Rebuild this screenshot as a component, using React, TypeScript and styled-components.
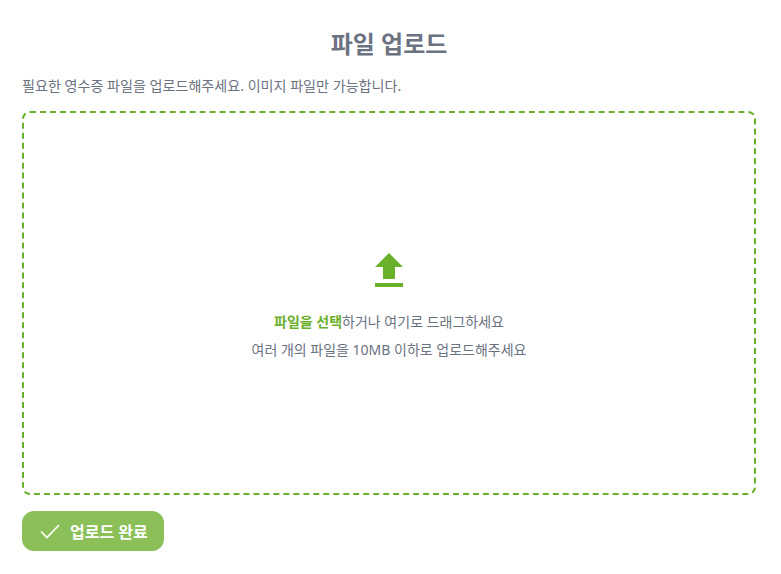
import styled, { createGlobalStyle } from "styled-components";

const GlobalStyle = createGlobalStyle`
  html, body {
    margin: 0;
    background: #ffffff;
  }
  body {
    font-family: "Noto Sans", "Noto Sans CJK KR", sans-serif;
  }
`;

const Page = styled.div`
  display: flex;
  flex-direction: column;
  height: 574px;
  box-sizing: border-box;
  padding: 26px 25px 23px 22px;
  overflow: hidden;
`;

const Title = styled.h1`
  margin: 0;
  font-size: 24px;
  line-height: 36px;
  font-weight: 700;
  color: #6b7280;
  text-align: center;
`;

const Description = styled.p`
  margin: 12px 0 0;
  font-size: 14.08px;
  line-height: 24px;
  color: #6b7280;
`;

const DropZone = styled.div`
  display: flex;
  flex-direction: column;
  align-items: center;
  justify-content: center;
  box-sizing: border-box;
  height: 384px;
  margin-top: 13px;
  padding-top: 10px;
  border: 2px dashed #69b02b;
  border-radius: 8px;
`;

const UploadIcon = styled.svg`
  display: block;
  width: 28px;
  height: 34px;
  margin-bottom: 21px;
`;

const DropText = styled.p`
  margin: 0;
  font-size: 14px;
  line-height: 28px;
  color: #6b7280;
`;

const Pick = styled.span`
  color: #69b02b;
  font-weight: 700;
`;

const DoneButton = styled.button`
  display: flex;
  align-items: center;
  gap: 9px;
  align-self: flex-start;
  height: 40px;
  margin-top: 16px;
  padding: 0 16px 0 17px;
  border: 0;
  border-radius: 12px;
  background: #8bc058;
  color: #ffffff;
  font-family: inherit;
  font-size: 16px;
  font-weight: 700;
`;

const App = () => {
  return (
    <>
      <GlobalStyle />
      <Page>
        <Title>파일 업로드</Title>
        <Description>필요한 영수증 파일을 업로드해주세요. 이미지 파일만 가능합니다.</Description>
        <DropZone>
          <UploadIcon viewBox="0 0 28 34" aria-hidden="true">
            <path d="M14 0 L28 14 H20 V26 H8 V14 H0 Z" fill="#69b02b" />
            <rect x="0" y="30" width="28" height="4" fill="#69b02b" />
          </UploadIcon>
          <DropText>
            <Pick>파일을 선택</Pick>하거나 여기로 드래그하세요
          </DropText>
          <DropText>여러 개의 파일을 10MB 이하로 업로드해주세요</DropText>
        </DropZone>
        <DoneButton type="button">
          <svg width="22" height="22" viewBox="0 0 22 22" fill="none" aria-hidden="true">
            <path d="M2 11.5 L8 17.5 L20 5" stroke="#ffffff" strokeWidth="1.75" />
          </svg>
          업로드 완료
        </DoneButton>
      </Page>
    </>
  );
};

export default App;
